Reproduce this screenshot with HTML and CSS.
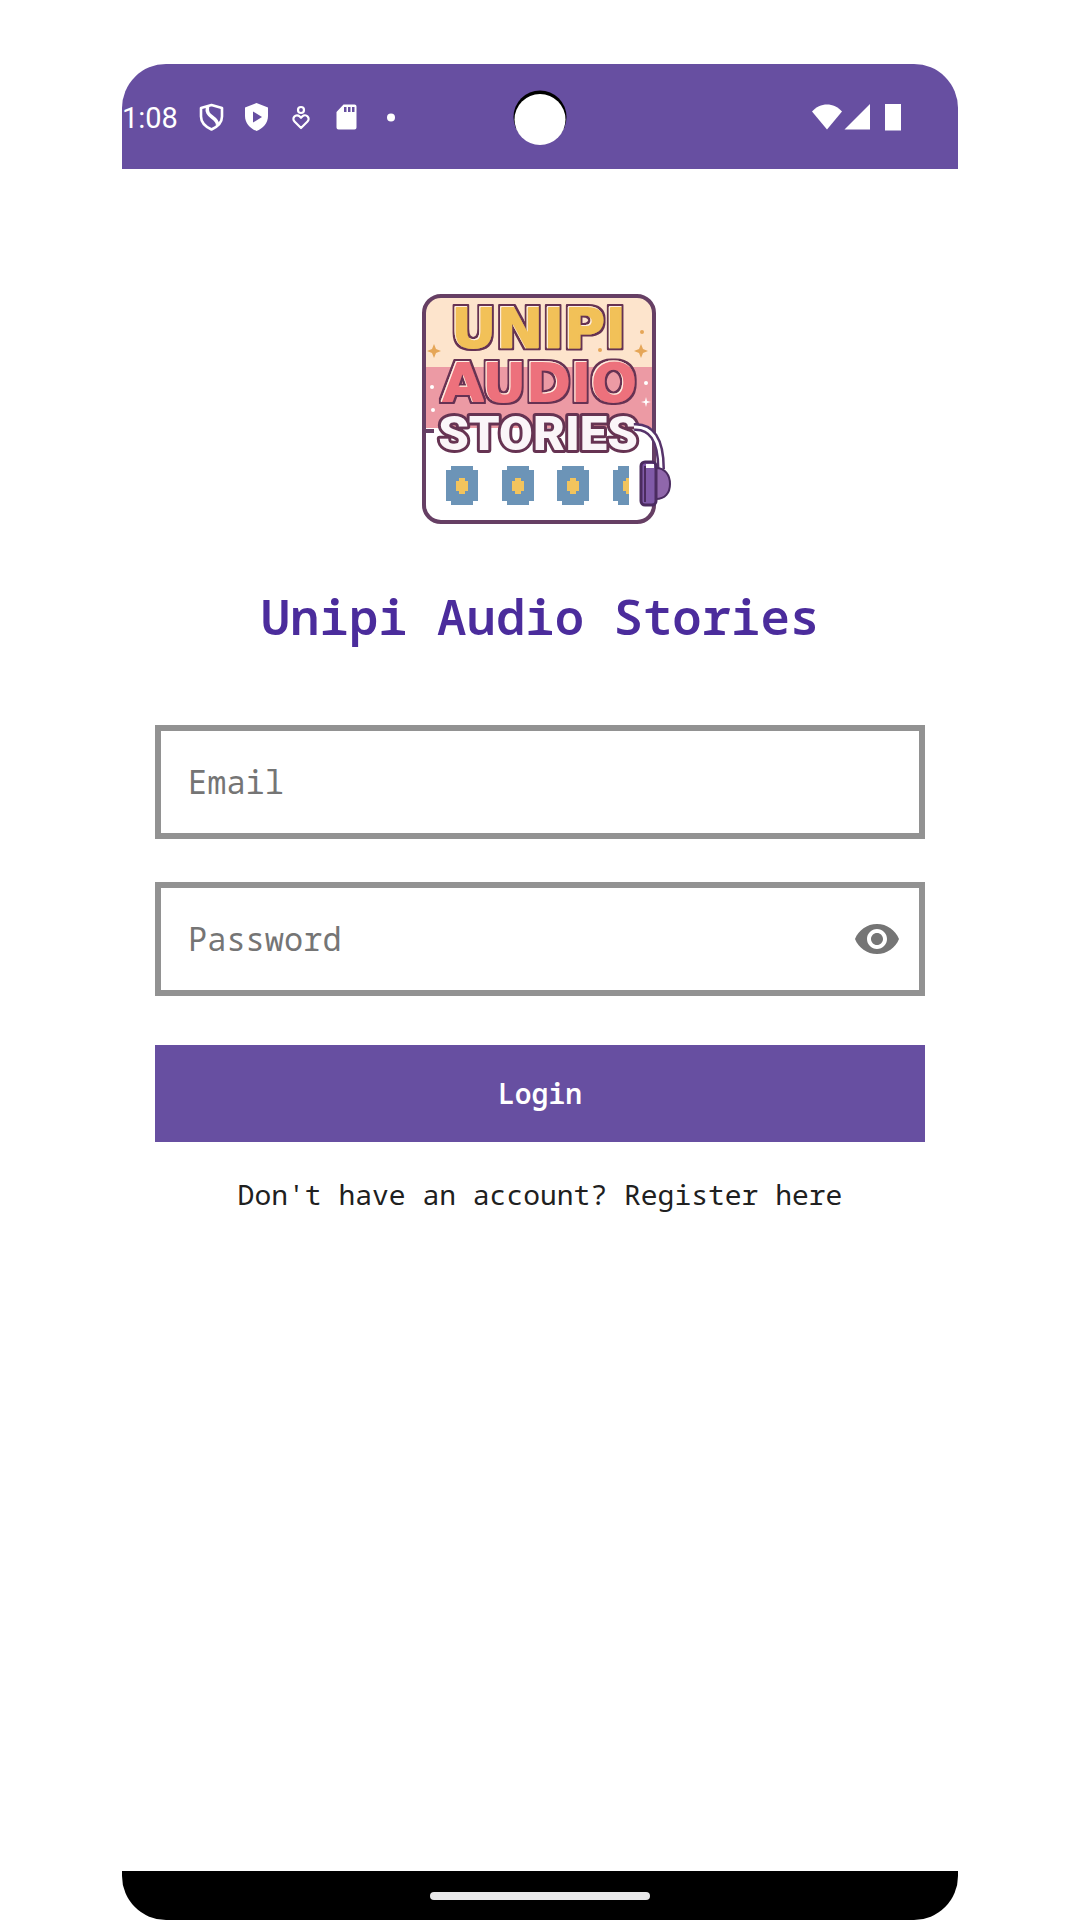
FILE: index.html
```html
<!DOCTYPE html>
<html lang="en">
<head>
  <meta charset="utf-8">
  <meta name="viewport" content="width=device-width, initial-scale=1">
  <title>Unipi Audio Stories</title>
  <link rel="stylesheet" href="styles.css">
</head>
<body>
  <div class="phone">
    <header class="status">
      <div class="status-left">
        <span class="time">1:08</span>
        <svg class="status-icon" viewBox="0 0 25 28" fill="none" stroke="#fff" stroke-width="2.6" stroke-linejoin="round" aria-hidden="true">
          <path d="M12.500 2 23 5v8.500c0 6-4 10-10.500 13C6 23.500 2 19.500 2 13.500V5z"/>
          <path d="M8.500 3.500c-1 6 1 8 4.500 10.500s6 4.500 5.500 8" stroke-width="3.500"/>
        </svg>
        <svg class="status-icon" viewBox="0 0 25 28" aria-hidden="true">
          <path fill="#fff" fill-rule="evenodd" d="M12.500 0 24 4.500V13c0 7-5 12.500-11.500 15C6 25.500 1 20 1 13V4.500zM9 8.500v11l9-5.500z"/>
        </svg>
        <svg class="status-icon" viewBox="0 0 25 28" fill="none" stroke="#fff" stroke-width="2.200" stroke-linejoin="round" aria-hidden="true">
          <circle cx="12" cy="7" r="3"/>
          <path d="m12 25-6.500-6.500a3.600 3.600 0 0 1 5-5.200l1.500 1.500 1.500-1.500a3.600 3.600 0 0 1 5 5.200z"/>
        </svg>
        <svg class="status-icon" viewBox="0 0 25 28" aria-hidden="true">
          <path fill="#fff" fill-rule="evenodd" d="M9.500 1.500h11a2 2 0 0 1 2 2V24.500a2 2 0 0 1-2 2h-16a2 2 0 0 1-2-2V9zM10 4v5h2.500V4zM14 4v5h2.500V4zM18 4v5h2.500V4z"/>
        </svg>
        <svg class="status-icon" viewBox="0 0 25 28" aria-hidden="true">
          <circle cx="12" cy="14.500" r="4" fill="#fff"/>
        </svg>
      </div>
      <svg class="camera" viewBox="0 0 54 56" aria-hidden="true">
        <circle cx="27" cy="27" r="26.500" fill="#000"/>
        <circle cx="27" cy="29.500" r="25.500" fill="#fff"/>
      </svg>
      <svg class="signals" viewBox="0 0 90 28" fill="#fff" aria-hidden="true">
        <path d="M0 8.500C8-1 22-1 30 8.500L15 26.500z"/>
        <path d="M58 1v25.500H32.500z"/>
        <path d="M73 1h16v26.500H73z"/>
      </svg>
    </header>

    <main class="login">
      <svg class="logo" viewBox="0 0 256 236" role="img" aria-label="Unipi Audio Stories logo">
        <defs>
          <clipPath id="badge"><rect x="4" y="6" width="230" height="226" rx="17"/></clipPath>
          <clipPath id="strip"><rect x="0" y="170" width="209" height="50"/></clipPath>
          <filter id="shine" x="-10%" y="-10%" width="120%" height="120%">
            <feMorphology in="SourceAlpha" operator="dilate" radius="2" result="edge"/>
            <feFlood flood-color="#663352"/>
            <feComposite in2="edge" operator="in" result="outline"/>
            <feOffset in="SourceAlpha" dx="1" dy="1" result="shifted"/>
            <feFlood flood-color="#fff0e4"/>
            <feComposite in2="SourceAlpha" operator="in"/>
            <feComposite in2="shifted" operator="out" result="light"/>
            <feMerge>
              <feMergeNode in="outline"/>
              <feMergeNode in="SourceGraphic"/>
              <feMergeNode in="light"/>
            </feMerge>
          </filter>
          <g id="tile">
            <path fill="#6c94b7" d="M5 0h22v4h5v31h-5v4H5v-4H0V4h5z"/>
            <path fill="#f2c45d" d="M13 12h6v3h3v10h-3v3h-6v-3h-3V15h3z"/>
          </g>
          <path id="star" d="M0-7 2-2 7 0 2 2 0 7-2 2-7 0-2-2z"/>
        </defs>
        <g clip-path="url(#badge)">
          <path fill="#fff" d="M0 0h240v236H0z"/>
          <path fill="#fde4cc" d="M0 0h240v77H0z"/>
          <path fill="#ec9aa4" d="M0 77h240v61H0z"/>
        </g>
        <rect x="4" y="6" width="230" height="226" rx="17" fill="none" stroke="#663f64" stroke-width="4"/>
        <path fill="#663f64" d="M6 139h8v4H6z"/>
        <use href="#star" x="14" y="61" fill="#e5a657"/>
        <use href="#star" x="221" y="61" fill="#e5a657"/>
        <g fill="#e5a657"><circle cx="222" cy="42" r="2"/><circle cx="180" cy="60" r="2"/></g>
        <g fill="#fff"><circle cx="12" cy="97" r="2"/><circle cx="13" cy="120" r="2"/><circle cx="226" cy="93" r="2"/><path d="m226 107 1 4 4 1-4 1-1 4-1-4-4-1 4-1z"/></g>
        <text class="word gold" x="118" y="57" filter="url(#shine)">UNIPI</text>
        <text class="word rose" x="119" y="111" filter="url(#shine)">AUDIO</text>
        <text class="word white" x="118" y="160">STORIES</text>
        <use href="#tile" x="26" y="176"/>
        <use href="#tile" x="82" y="176"/>
        <use href="#tile" x="137" y="176"/>
        <g clip-path="url(#strip)"><use href="#tile" x="193" y="176"/></g>
        <path d="M214 137c17-1 27 12 27 42" fill="none" stroke="#57346b" stroke-width="8"/>
        <path d="M214 137c17-1 27 12 27 42" fill="none" stroke="#fff" stroke-width="3"/>
        <path d="M236 178c9 0 14 7 14 16s-5 15-14 15z" fill="#9067ab" stroke="#4b2c60" stroke-width="2"/>
        <rect x="221" y="172" width="15" height="43" rx="4" fill="#805aa8" stroke="#4b2c60" stroke-width="3"/>
        <path d="M226 176h8" stroke="#fff" stroke-width="4"/>
        <path d="M225 176v36" stroke="#4b2c60" stroke-width="2"/>
      </svg>

      <h1 class="title">Unipi Audio Stories</h1>

      <form class="form">
        <div class="field">
          <input class="input" type="email" placeholder="Email" aria-label="Email">
        </div>
        <div class="field">
          <input class="input" type="password" placeholder="Password" aria-label="Password">
          <button class="reveal" type="button" aria-label="Show password">
            <svg class="eye" viewBox="0 0 24 24" aria-hidden="true">
              <path fill="#757575" d="M12 4.500C7 4.500 2.730 7.610 1 12c1.730 4.390 6 7.500 11 7.500s9.270-3.110 11-7.500c-1.730-4.390-6-7.500-11-7.500zM12 17c-2.760 0-5-2.240-5-5s2.240-5 5-5 5 2.240 5 5-2.240 5-5 5zm0-8c-1.660 0-3 1.340-3 3s1.340 3 3 3 3-1.340 3-3-1.340-3-3-3z"/>
            </svg>
          </button>
        </div>
        <button class="submit" type="submit">Login</button>
      </form>
      <a class="register" href="#register">Don't have an account? Register here</a>
    </main>

    <footer class="nav"><span class="pill"></span></footer>
  </div>
</body>
</html>
```
FILE: styles.css
```css
* {
  box-sizing: border-box;
}

body {
  margin: 0;
  background: #fff;
  color: #202020;
  font-family: "Droid Sans Mono", "Noto Sans Mono", "Noto Sans Mono CJK SC", "DejaVu Sans Mono", monospace;
}

.phone {
  display: flex;
  flex-direction: column;
  min-height: 100vh;
  padding: 64px 122px 0;
}

.status {
  position: relative;
  display: flex;
  align-items: center;
  justify-content: space-between;
  height: 105px;
  padding-right: 56px;
  border-radius: 44px 44px 0 0;
  background: #674fa1;
  color: #fff;
}

.status-left {
  display: flex;
  align-items: center;
  gap: 20px;
}

.time {
  padding: 2px 1px 0 0;
  font: 29px/32px Roboto, sans-serif;
}

.status-icon {
  width: 25px;
  height: 28px;
}

.camera {
  position: absolute;
  top: 26px;
  left: 50%;
  width: 54px;
  height: 56px;
  margin-left: -27px;
}

.signals {
  width: 90px;
  height: 28px;
}

.login {
  display: flex;
  flex: 1;
  flex-direction: column;
  align-items: center;
  padding: 121px 33px 40px;
}

.logo {
  width: 256px;
  height: 236px;
  margin-left: 16px;
}

.word {
  font-family: "DejaVu Sans", sans-serif;
  font-size: 54px;
  font-weight: 900;
  text-anchor: middle;
  stroke-width: 2px;
  stroke-linejoin: round;
}

.gold {
  fill: #f2c158;
  stroke: #f2c158;
  font-size: 56px;
}

.rose {
  fill: #ed717c;
  stroke: #ed717c;
}

.white {
  fill: #faf5f8;
  stroke: #663352;
  stroke-width: 6px;
  paint-order: stroke;
  font-family: Roboto, sans-serif;
  font-size: 49px;
}

.title {
  margin: 59px 0 77px;
  color: #4b2c9c;
  font-size: 49px;
  font-weight: 600;
  line-height: 63px;
}

.form {
  display: flex;
  flex-direction: column;
  gap: 43px;
  width: 100%;
}

.field {
  display: flex;
  align-items: center;
  height: 114px;
  padding: 0 18px 0 27px;
  border: 6px solid #929292;
}

.input {
  flex: 1;
  min-width: 0;
  padding: 0;
  border: 0;
  outline: 0;
  background: none;
  color: #202020;
  font: inherit;
  font-size: 32px;
  line-height: 40px;
}

.input::placeholder {
  color: #757575;
  opacity: 1;
}

.reveal {
  padding: 0;
  border: 0;
  background: none;
}

.eye {
  display: block;
  width: 48px;
  height: 48px;
}

.submit {
  height: 97px;
  margin-top: 6px;
  padding: 0 0 2px;
  border: 0;
  background: #674fa1;
  color: #fff;
  font: inherit;
  font-size: 28px;
  font-weight: 600;
}

.register {
  margin-top: 32px;
  color: #202020;
  font-size: 28px;
  line-height: 40px;
  text-decoration: none;
}

.nav {
  display: flex;
  align-items: center;
  justify-content: center;
  height: 49px;
  border-radius: 0 0 44px 44px;
  background: #000;
}

.pill {
  width: 220px;
  height: 8px;
  border-radius: 4px;
  background: #e9e9ea;
}
```
